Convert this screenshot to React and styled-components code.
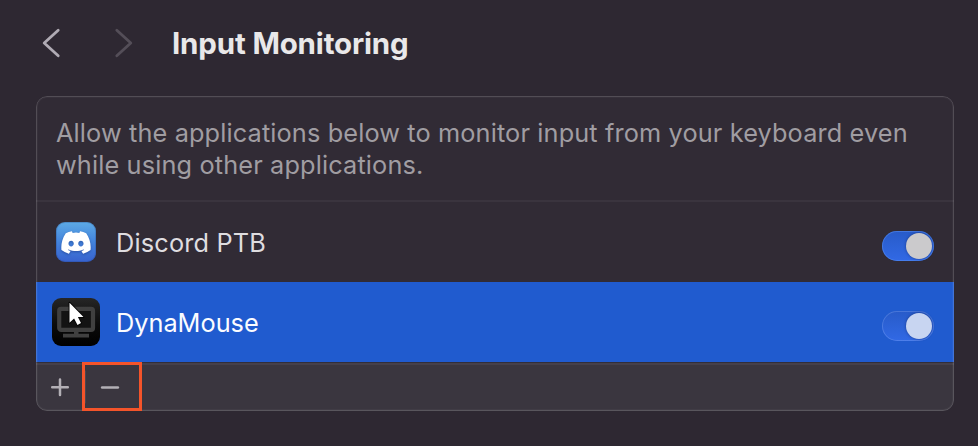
import React from "react";
import styled, { createGlobalStyle } from "styled-components";
import { FaDiscord } from "react-icons/fa";

const GlobalStyle = createGlobalStyle`
  * { box-sizing: border-box; }
  body {
    margin: 0;
    background: #2e2832;
    font-family: Inter, "Liberation Sans", sans-serif;
    overflow: hidden;
  }
`;

const Page = styled.main`
  width: 978px;
  height: 446px;
  padding: 0 24px 0 36px;
  background: #2e2832;
`;

const Header = styled.header`
  height: 96px;
  padding: 24px 0 0 4px;
  display: flex;
  align-items: flex-start;
`;

const NavButton = styled.button`
  width: 24px;
  height: 38px;
  margin-right: ${(p) => p.$gap}px;
  padding: 0;
  border: 0;
  background: none;
  color: ${(p) => (p.$dim ? "#544e58" : "#b0abb4")};
  svg { display: block; }
`;

const Title = styled.h1`
  margin: 0;
  font-size: 29.5px;
  line-height: 38px;
  font-weight: 700;
  letter-spacing: ${(p) => p.$tracking}px;
  color: #e9e8e9;
  white-space: nowrap;
`;

const Panel = styled.section`
  position: relative;
  width: 918px;
  height: 315px;
  border-radius: 11px;
  overflow: hidden;
  background: #312b35;
  &::after {
    content: "";
    position: absolute;
    inset: 0;
    border: 1px solid rgba(255, 255, 255, 0.16);
    box-shadow: inset 0 0 0 1px rgba(255, 255, 255, 0.03);
    border-radius: 11px;
    pointer-events: none;
  }
`;

const Description = styled.div`
  height: 106px;
  padding: 21px 20px 0;
  border-bottom: 2px solid #3a343e;
  color: #a09da2;
  font-size: 25.3px;
  line-height: 32px;
`;

const Line = styled.span`
  display: block;
  white-space: nowrap;
  letter-spacing: ${(p) => p.$tracking}px;
`;

const Row = styled.div`
  height: 80px;
  padding: 0 20px 0 ${(p) => (p.$selected ? 16 : 20)}px;
  display: flex;
  align-items: center;
  gap: ${(p) => (p.$selected ? 16 : 20)}px;
  background: ${(p) => (p.$selected ? "#205bcf" : "transparent")};
  color: ${(p) => (p.$selected ? "#fbfcff" : "#dfdde0")};
`;

const AppName = styled.span`
  flex: 1;
  font-size: 25.3px;
  line-height: 32px;
  padding-top: 2px;
  letter-spacing: ${(p) => p.$tracking}px;
`;

const DiscordTile = styled.span`
  width: 40px;
  height: 40px;
  border-radius: 9px;
  display: flex;
  align-items: center;
  justify-content: center;
  background: linear-gradient(#5daae5, #4383dc 50%, #3862ce);
  box-shadow: inset 0 0 0 1px rgba(30, 60, 120, 0.25);
  svg {
    width: 32px;
    height: 29px;
    flex: none;
    color: #fff;
    overflow: visible;
    filter: drop-shadow(0 1px 1px rgba(20, 45, 120, 0.5));
  }
`;

const Switch = styled.span`
  width: 52px;
  height: 30px;
  margin-top: 8px;
  padding: 2px;
  border-radius: 15px;
  display: flex;
  justify-content: flex-end;
  background: linear-gradient(#285bc9, #3169e5);
  box-shadow: inset 0 0 0 1px
    ${(p) => (p.$selected ? "rgba(140, 175, 245, 0.32)" : "rgba(90, 145, 245, 0.5)")};
`;

const Knob = styled.span`
  width: 26px;
  height: 26px;
  border-radius: 50%;
  background: ${(p) => (p.$selected ? "#c8d5f1" : "#cbcacc")};
  box-shadow: 0 0 3px rgba(0, 10, 50, 0.45);
`;

const Footer = styled.footer`
  height: 49px;
  display: flex;
  background: #3a363f;
  border-top: 1px solid #322e39;
  box-shadow: inset 0 2px 0 #45404a;
  color: #b3b0b6;
`;

const FooterButton = styled.button`
  width: ${(p) => p.$width}px;
  height: 48px;
  padding: 0;
  border: 0;
  background: none;
  color: inherit;
  svg { display: block; }
`;

const Highlight = styled.span`
  position: absolute;
  z-index: 1;
  left: 46px;
  top: 266px;
  width: 60px;
  height: 49px;
  border: 3px solid #f4542a;
`;

const Chevron = ({ right }) => (
  <svg width="24" height="38" viewBox="0 0 24 38" fill="none" stroke="currentColor" strokeWidth="2.8" strokeLinecap="round" strokeLinejoin="round">
    <path d={right ? "M4.8 6.2 18.8 19 4.8 31.8" : "M18.2 6.2 4.2 19 18.2 31.8"} />
  </svg>
);

const DynaMouseIcon = () => (
  <svg width="48" height="48" viewBox="0 0 48 48">
    <defs>
      <linearGradient id="tile" x1="0" y1="0" x2="0" y2="1">
        <stop offset="0" stopColor="#262626" />
        <stop offset=".55" stopColor="#0b0b0b" />
        <stop offset="1" stopColor="#000" />
      </linearGradient>
    </defs>
    <rect width="48" height="48" rx="9" fill="url(#tile)" />
    <rect x="7.2" y="10.9" width="33.8" height="21" rx="2" fill="#131313" stroke="#404040" strokeWidth="4.2" />
    <path d="M22 33.5h4.5v2.3H37v3.7H11v-3.7h11z" fill="#404040" />
    <path d="M17.5 4.7v20.1l4.6-4.2 3.4 6.3 3.5-1.8-3.1-6h5.6z" fill="#fff" stroke="#050505" strokeWidth="1.8" strokeLinejoin="round" paintOrder="stroke" />
  </svg>
);

const PlusIcon = () => (
  <svg width="48" height="48" viewBox="0 0 48 48" fill="none" stroke="currentColor" strokeWidth="2.5" strokeLinecap="round">
    <path d="M16.2 24.2h15.6M24 16.4V32" />
  </svg>
);

const MinusIcon = () => (
  <svg width="52" height="48" viewBox="0 0 52 48" fill="none" strokeLinecap="round">
    <path d="M1.5 8v32" stroke="#4a464f" />
    <path d="M18.2 24.5h15.6" stroke="currentColor" strokeWidth="2.7" />
  </svg>
);

const Toggle = ({ selected }) => (
  <Switch $selected={selected} role="switch" aria-checked="true">
    <Knob $selected={selected} />
  </Switch>
);

export default function App() {
  return (
    <Page>
      <GlobalStyle />
      <Header>
        <NavButton $gap={48} aria-label="Back"><Chevron /></NavButton>
        <NavButton $gap={36} $dim aria-label="Forward"><Chevron right /></NavButton>
        <Title $tracking={-0.17}>Input Monitoring</Title>
      </Header>
      <Panel>
        <Description>
          <Line $tracking={0.13}>Allow the applications below to monitor input from your keyboard even</Line>
          <Line $tracking={0.14}>while using other applications.</Line>
        </Description>
        <Row>
          <DiscordTile><FaDiscord /></DiscordTile>
          <AppName $tracking={0.18}>Discord PTB</AppName>
          <Toggle />
        </Row>
        <Row $selected>
          <DynaMouseIcon />
          <AppName $tracking={0}>DynaMouse</AppName>
          <Toggle selected />
        </Row>
        <Footer>
          <FooterButton $width={48} aria-label="Add"><PlusIcon /></FooterButton>
          <FooterButton $width={52} aria-label="Remove"><MinusIcon /></FooterButton>
        </Footer>
        <Highlight />
      </Panel>
    </Page>
  );
}
